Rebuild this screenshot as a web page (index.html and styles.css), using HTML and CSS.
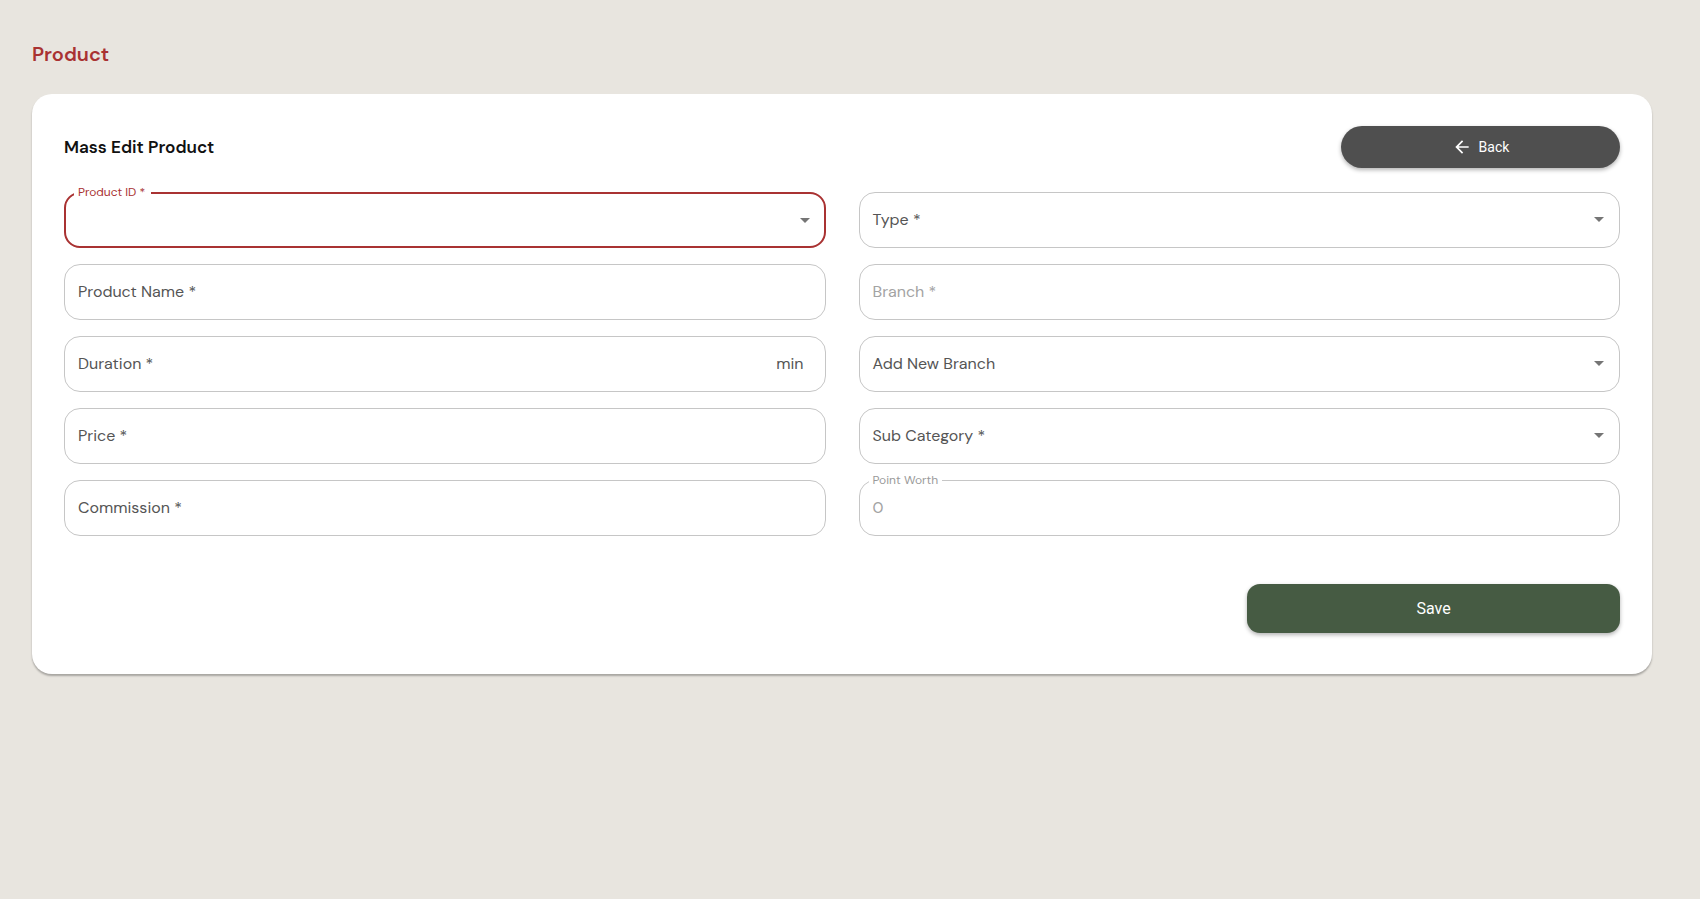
FILE: index.html
```html
<!DOCTYPE html>
<html lang="en">
<head>
<meta charset="utf-8">
<title>Product</title>
<link rel="stylesheet" href="styles.css">
</head>
<body>
<main class="page">
  <h1 class="page-title">Product</h1>
  <section class="card">
    <header class="card-header">
      <h2 class="card-title">Mass Edit Product</h2>
      <button class="btn-back" type="button">
        <svg class="btn-back-icon" viewBox="0 0 24 24" aria-hidden="true"><path d="M20 11H7.83l5.59-5.59L12 4l-8 8 8 8 1.41-1.41L7.83 13H20v-2z"/></svg>
        <span>Back</span>
      </button>
    </header>

    <div class="form-grid">
      <div class="field field-focused field-select">
        <span class="field-legend field-legend-focused">Product ID *</span>
        <span class="field-label"></span>
        <svg class="field-arrow" viewBox="0 0 24 24" aria-hidden="true"><path d="M7 10l5 5 5-5z"/></svg>
      </div>
      <div class="field field-select">
        <span class="field-label">Type *</span>
        <svg class="field-arrow" viewBox="0 0 24 24" aria-hidden="true"><path d="M7 10l5 5 5-5z"/></svg>
      </div>

      <div class="field">
        <span class="field-label">Product Name *</span>
      </div>
      <div class="field">
        <span class="field-label field-label-disabled">Branch *</span>
      </div>

      <div class="field field-adorned">
        <span class="field-label">Duration *</span>
        <span class="field-adornment">min</span>
      </div>
      <div class="field field-select">
        <span class="field-label">Add New Branch</span>
        <svg class="field-arrow" viewBox="0 0 24 24" aria-hidden="true"><path d="M7 10l5 5 5-5z"/></svg>
      </div>

      <div class="field">
        <span class="field-label">Price *</span>
      </div>
      <div class="field field-select">
        <span class="field-label">Sub Category *</span>
        <svg class="field-arrow" viewBox="0 0 24 24" aria-hidden="true"><path d="M7 10l5 5 5-5z"/></svg>
      </div>

      <div class="field">
        <span class="field-label">Commission *</span>
      </div>
      <div class="field">
        <span class="field-legend">Point Worth</span>
        <span class="field-label field-label-disabled">0</span>
      </div>
    </div>

    <div class="card-actions">
      <button class="btn-save" type="button">Save</button>
    </div>
  </section>
</main>
</body>
</html>
```

FILE: styles.css
```css
* {
  box-sizing: border-box;
}

html, body {
  margin: 0;
  padding: 0;
  background: #e8e5df;
}

body {
  font-family: "DM Sans", Inter, "Noto Sans", Arial, sans-serif;
  color: #1d1d1d;
}

.page {
  padding: 42px 48px 40px 32px;
}

.page-title {
  margin: 0;
  font-size: 20px;
  line-height: 24px;
  font-weight: 600;
  color: #a93232;
}

.card {
  margin-top: 28px;
  width: 1620px;
  background: #ffffff;
  border-radius: 20px;
  padding: 32px 32px 41px;
  box-shadow: 0 2px 2px rgba(0, 0, 0, 0.28);
}

.card-header {
  display: flex;
  align-items: center;
  justify-content: space-between;
  height: 42px;
  margin-bottom: 24px;
}

.card-title {
  margin: 0;
  font-size: 17.2px;
  font-weight: 600;
  color: #111;
}

.btn-back {
  width: 279px;
  height: 42px;
  border: none;
  border-radius: 21px;
  background: #4f4f4f;
  color: #ffffff;
  font-family: Roboto, Arial, sans-serif;
  font-size: 14px;
  display: flex;
  align-items: center;
  justify-content: center;
  gap: 7px;
  box-shadow: 0 2px 4px rgba(0, 0, 0, 0.3);
  padding: 0;
}

.btn-back-icon {
  width: 20px;
  height: 20px;
  fill: #ffffff;
}

.form-grid {
  display: grid;
  grid-template-columns: 1fr 1fr;
  column-gap: 33px;
  row-gap: 16px;
}

.field {
  position: relative;
  height: 56px;
  border: 1px solid #c6c6c6;
  border-radius: 16px;
  display: flex;
  align-items: center;
  padding: 0 8px 2px 13px;
}

.field-focused {
  border: 2px solid #a93232;
  padding: 0 7px 0 12px;
}

.field-label {
  flex: 1;
  font-size: 16px;
  color: #555555;
  white-space: nowrap;
}

.field-label-disabled {
  color: #a3a3a3;
}

.field-legend {
  position: absolute;
  top: -9px;
  left: 9px;
  padding: 0 4px;
  background: #ffffff;
  font-size: 12px;
  line-height: 16px;
  color: #9a9a9a;
}

.field-legend-focused {
  left: 8px;
  top: -10px;
  color: #a93232;
  padding-right: 6px;
}

.field-arrow {
  width: 24px;
  height: 24px;
  fill: #757575;
  flex: none;
}

.field-adorned {
  padding-right: 21px;
}

.field-adornment {
  font-size: 16px;
  color: #555555;
}

.card-actions {
  display: flex;
  justify-content: flex-end;
  margin-top: 48px;
}

.btn-save {
  width: 373px;
  height: 49px;
  border: none;
  border-radius: 13px;
  background: #465b43;
  color: #ffffff;
  font-family: Roboto, Arial, sans-serif;
  font-size: 16px;
  box-shadow: 0 2px 4px rgba(0, 0, 0, 0.3);
}
```
